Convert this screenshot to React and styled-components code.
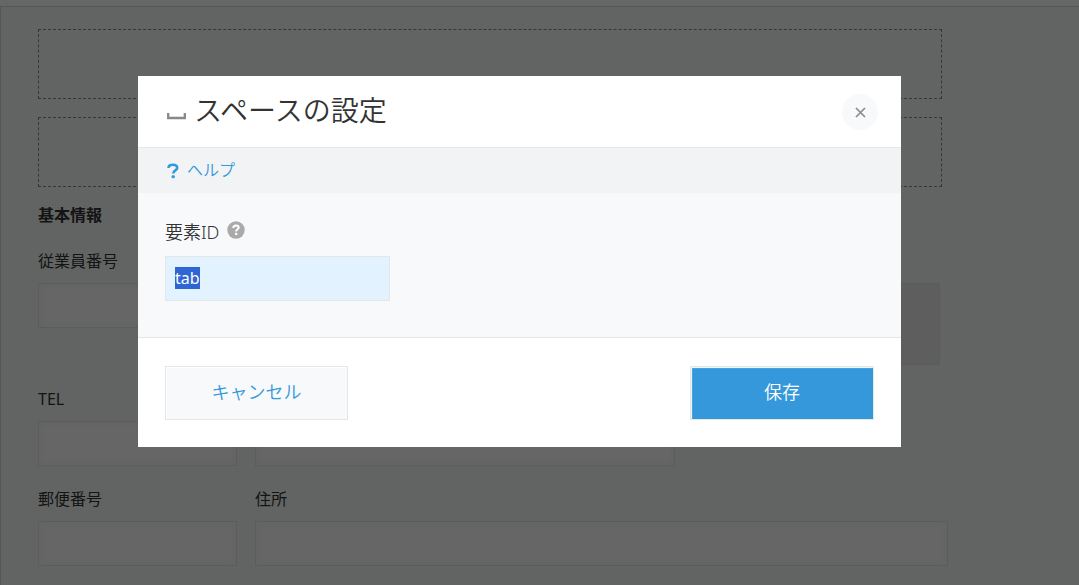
import React, { useEffect, useRef } from "react";
import styled, { createGlobalStyle } from "styled-components";

const GlobalStyle = createGlobalStyle`
  *, *::before, *::after { box-sizing: border-box; }
  body {
    margin: 0;
    background: #fff;
    color: #333;
    font-family: "Noto Sans", "Noto Sans CJK JP", sans-serif;
    font-size: 16px;
    line-height: 24px;
  }
  button, input { font: inherit; }
`;

const Page = styled.div`
  padding-top: 6px;
`;

const FormPanel = styled.main`
  min-height: calc(100vh - 6px);
  padding: 22px 36px 18px 37px;
  background: #f5faf7;
  border: 1px solid #d5d9d8;
  border-width: 1px 0 0 1px;
`;

const Spacer = styled.div`
  max-width: 904px;
  height: 70px;
  margin-bottom: 18px;
  border: 1px dashed #888;
`;

const SectionTitle = styled.h2`
  margin: -2px 0 22px;
  font-size: 16px;
  line-height: 24px;
`;

const Row = styled.div`
  display: flex;
  gap: 18px;
  max-width: 910px;
  margin-bottom: ${(p) => p.$gap}px;
`;

const Field = styled.div`
  display: flex;
  flex-direction: column;
  justify-content: ${(p) => (p.$bottom ? "flex-end" : "flex-start")};
  gap: 10px;
  width: ${(p) => p.$width}px;
`;

const TextBox = styled.input`
  width: 100%;
  height: 45px;
  padding: 0 9px;
  background: #fff;
  border: 1px solid #e3e7e8;
  box-shadow: inset 2px 2px 8px #f8f8f8, inset -2px -2px 8px #f8f8f8;
`;

const ReferenceBox = styled.div`
  width: 220px;
  height: 82px;
  margin: 34px 8px 0 auto;
  background: #ebebeb;
  border: 1px solid #e3e7e8;
`;

const Overlay = styled.div`
  position: fixed;
  inset: 0;
  display: flex;
  justify-content: center;
  align-items: flex-start;
  padding: 76px 40px 0 0;
  background: rgba(0, 0, 0, 0.6);
`;

const Dialog = styled.form`
  width: 100%;
  max-width: 763px;
  background: #fff;
  font-weight: 350;
`;

const DialogHeader = styled.header`
  display: flex;
  align-items: center;
  justify-content: space-between;
  height: 72px;
  padding: 0 23px 0 29px;
  border-bottom: 1px solid #e3e7e8;
`;

const DialogTitle = styled.h1`
  display: flex;
  align-items: center;
  gap: 7px;
  margin: 0;
  padding-bottom: 4px;
  font-size: 28px;
  font-weight: 350;
  line-height: 40px;

  svg { margin-top: 12px; }
`;

const CloseButton = styled.button`
  display: grid;
  place-items: center;
  width: 36px;
  height: 36px;
  padding: 0;
  border: 0;
  border-radius: 50%;
  background: #f7f9fa;
`;

const HelpBar = styled.div`
  display: flex;
  align-items: center;
  height: 45px;
  padding: 0 29px 2px;
  background: #f1f3f5;
`;

const HelpLink = styled.a`
  display: flex;
  align-items: center;
  gap: 8px;
  color: #3498db;
  text-decoration: none;

  svg { margin-top: 2px; }
`;

const DialogBody = styled.div`
  padding: 27px 27px 36px;
  background: #f8f9fb;
  border-bottom: 1px solid #e3e7e8;
`;

const LabelLine = styled.div`
  display: flex;
  align-items: center;
  gap: 8px;
  margin-bottom: 12px;
  font-size: 18px;
  font-weight: 400;
  line-height: 24px;

  label { font-weight: 350; }
  svg { margin-bottom: 4px; }
`;

const IdInput = styled.input`
  display: block;
  width: 225px;
  height: 45px;
  padding: 0 9px 2px;
  color: #333;
  font-size: 16px;
  font-weight: 400;
  line-height: 24px;
  background: #e2f2fe;
  border: 1px solid #e3e7e8;
  outline: 0;

  &::selection {
    color: #fff;
    background: rgba(46, 101, 211, 0.996);
  }
`;

const DialogFooter = styled.footer`
  display: flex;
  justify-content: space-between;
  padding: 28px 27px 27px;
`;

const ActionButton = styled.button`
  width: ${(p) => (p.$primary ? 184 : 183)}px;
  height: 54px;
  padding: 0 0 2px;
  color: ${(p) => (p.$primary ? "#fff" : "#3498db")};
  background: ${(p) => (p.$primary ? "#3498db" : "#f7f9fa")};
  border: 1px solid #e3e7e8;
  box-shadow: inset 1px 1px 1px #fff;
  font-size: 18px;
`;

function SpaceIcon() {
  return (
    <svg width="20" height="8" viewBox="0 0 20 8" aria-hidden="true">
      <path d="M1.200 1v5h16.600V1" fill="none" stroke="#888" strokeWidth="2.300" />
    </svg>
  );
}

function QuestionIcon() {
  return (
    <svg width="12" height="16" viewBox="0 0 12 16" aria-hidden="true">
      <path d="M1.500 5C1.500 2.600 3.300 1.700 6 1.700s4.200 1.200 4.200 3.200C10.200 7.500 6.200 7.300 6.200 10.600" fill="none" stroke="#3498db" strokeWidth="2.600" />
      <rect x="4.600" y="12.300" width="3.200" height="3" rx="1" fill="#3498db" />
    </svg>
  );
}

function HintIcon() {
  return (
    <svg width="18" height="18" viewBox="0 0 18 18" aria-hidden="true">
      <circle cx="9" cy="9" r="8.700" fill="#aaa" />
      <path d="M6.300 7C6.300 5.200 7.400 4.500 9 4.500s2.700.8 2.700 2.100c0 1.700-2.600 1.700-2.600 3.800" fill="none" stroke="#fff" strokeWidth="2" />
      <rect x="8" y="11.800" width="2.300" height="2.200" rx=".6" fill="#fff" />
    </svg>
  );
}

function CloseIcon() {
  return (
    <svg width="12" height="12" viewBox="0 0 12 12" aria-hidden="true">
      <path d="M2 2l9 9M11 2l-9 9" stroke="#8c8c8c" strokeWidth="1.700" />
    </svg>
  );
}

function FormField({ id, label, width }) {
  return (
    <Field $width={width}>
      <label htmlFor={id}>{label}</label>
      <TextBox id={id} type="text" />
    </Field>
  );
}

export default function App() {
  const inputRef = useRef(null);

  useEffect(() => {
    inputRef.current.focus();
    inputRef.current.select();
  }, []);

  return (
    <>
      <GlobalStyle />
      <Page inert>
        <FormPanel>
          <Spacer />
          <Spacer />
          <SectionTitle>基本情報</SectionTitle>
          <Row $gap={22}>
            <FormField id="employee" label="従業員番号" width={199} />
            <ReferenceBox />
          </Row>
          <Row $gap={21}>
            <FormField id="tel" label="TEL" width={199} />
            <Field $width={420} $bottom>
              <TextBox type="text" aria-labelledby="tel" />
            </Field>
          </Row>
          <Row $gap={0}>
            <FormField id="zip" label="郵便番号" width={199} />
            <FormField id="address" label="住所" width={693} />
          </Row>
        </FormPanel>
      </Page>
      <Overlay>
        <Dialog role="dialog" aria-modal="true" aria-labelledby="title" onSubmit={(e) => e.preventDefault()}>
          <DialogHeader>
            <DialogTitle id="title">
              <SpaceIcon />
              スペースの設定
            </DialogTitle>
            <CloseButton type="button" aria-label="閉じる">
              <CloseIcon />
            </CloseButton>
          </DialogHeader>
          <HelpBar>
            <HelpLink href="#help">
              <QuestionIcon />
              ヘルプ
            </HelpLink>
          </HelpBar>
          <DialogBody>
            <LabelLine>
              <label htmlFor="element-id">要素ID</label>
              <HintIcon />
            </LabelLine>
            <IdInput id="element-id" type="text" defaultValue="tab" ref={inputRef} />
          </DialogBody>
          <DialogFooter>
            <ActionButton type="button">キャンセル</ActionButton>
            <ActionButton type="submit" $primary>保存</ActionButton>
          </DialogFooter>
        </Dialog>
      </Overlay>
    </>
  );
}
